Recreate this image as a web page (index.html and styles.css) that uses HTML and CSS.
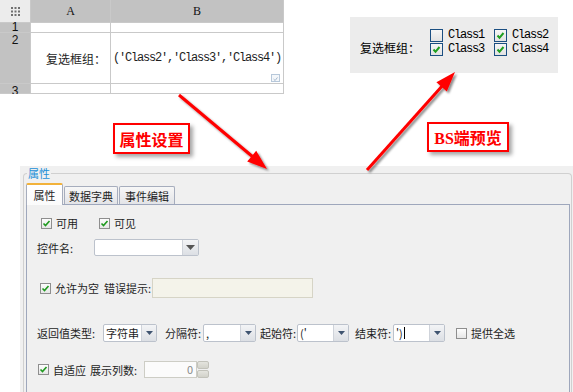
FILE: index.html
```html
<!DOCTYPE html>
<html lang="zh-CN">
<head>
    <meta charset="UTF-8">
    <title>复选框组 属性设置</title>
    <link rel="stylesheet" href="styles.css">
</head>
<body>
<div class="page">
    <div class="top">
        <!-- 报表设计器中的单元格 -->
        <div class="sheet">
            <div class="corner">
                <svg width="9" height="9" viewBox="0 0 9 9"><g fill="#707070"><rect x="0" y="0" width="2" height="2"/><rect x="3.5" y="0" width="2" height="2"/><rect x="7" y="0" width="2" height="2"/><rect x="0" y="3.5" width="2" height="2"/><rect x="3.5" y="3.5" width="2" height="2"/><rect x="7" y="3.5" width="2" height="2"/><rect x="0" y="7" width="2" height="2"/><rect x="3.5" y="7" width="2" height="2"/><rect x="7" y="7" width="2" height="2"/></g></svg>
            </div>
            <div class="colhd">A</div>
            <div class="colhd">B</div>

            <div class="rowhd">1</div>
            <div class="cell"></div>
            <div class="cell"></div>

            <div class="rowhd low">2</div>
            <div class="cell cell-label">复选框组：</div>
            <div class="cell cell-value">('Class2','Class3','Class4')
                <span class="cell-icon"><svg width="9" height="8" viewBox="0 0 9 8"><polyline points="2,4 4,6 7,2" fill="none" stroke="#9bb0c8" stroke-width="1.2"/></svg></span>
            </div>

            <div class="rowhd low">3</div>
            <div class="cell"></div>
            <div class="cell"></div>
        </div>

        <!-- BS端预览效果 -->
        <div class="preview">
            <span class="pv-label">复选框组：</span>
            <div class="pv-grid">
                <span class="pv-item"><span class="pv-box"></span>Class1</span>
                <span class="pv-item"><span class="pv-box"><svg width="11" height="11" viewBox="0 0 11 11"><polyline points="2.5,5.5 4.5,7.8 8.5,3" fill="none" stroke="#1f9e1f" stroke-width="2"/></svg></span>Class2</span>
                <span class="pv-item"><span class="pv-box"><svg width="11" height="11" viewBox="0 0 11 11"><polyline points="2.5,5.5 4.5,7.8 8.5,3" fill="none" stroke="#1f9e1f" stroke-width="2"/></svg></span>Class3</span>
                <span class="pv-item"><span class="pv-box"><svg width="11" height="11" viewBox="0 0 11 11"><polyline points="2.5,5.5 4.5,7.8 8.5,3" fill="none" stroke="#1f9e1f" stroke-width="2"/></svg></span>Class4</span>
            </div>
        </div>
    </div>

    <!-- 属性面板 -->
    <div class="window">
        <fieldset class="group">
            <legend>属性</legend>
            <div class="tabs">
                <div class="tab active">属性</div>
                <div class="tab tab-dict">数据字典</div>
                <div class="tab tab-event">事件编辑</div>
            </div>
            <div class="tab-body">
                <div class="row row-1">
                    <span class="chk on"><svg width="9" height="9" viewBox="0 0 9 9"><polyline points="1.5,4.5 3.5,6.6 7.5,2" fill="none" stroke="#1f9a1f" stroke-width="1.6"/></svg></span>
                    <span>可用</span>
                    <span class="chk on chk-visible"><svg width="9" height="9" viewBox="0 0 9 9"><polyline points="1.5,4.5 3.5,6.6 7.5,2" fill="none" stroke="#1f9a1f" stroke-width="1.6"/></svg></span>
                    <span>可见</span>
                </div>

                <div class="row row-2">
                    <span class="lbl w-name">控件名:</span>
                    <div class="combo w-105">
                        <span class="combo-text"></span>
                        <span class="combo-btn big"><svg width="9" height="5" viewBox="0 0 9 5"><polygon points="0,0 9,0 4.5,5" fill="#555"/></svg></span>
                    </div>
                </div>

                <div class="row row-3">
                    <span class="chk on"><svg width="9" height="9" viewBox="0 0 9 9"><polyline points="1.5,4.5 3.5,6.6 7.5,2" fill="none" stroke="#1f9a1f" stroke-width="1.6"/></svg></span>
                    <span class="w-44">允许为空</span>
                    <span class="lbl w-err">错误提示:</span>
                    <div class="field-disabled"></div>
                </div>

                <div class="row row-4">
                    <span class="lbl w-ret">返回值类型:</span>
                    <div class="combo w-54">
                        <span class="combo-text">字符串</span>
                        <span class="combo-btn"><svg width="7" height="4" viewBox="0 0 7 4"><polygon points="0,0 7,0 3.5,4" fill="#3f5470"/></svg></span>
                    </div>
                    <span class="lbl w-sep">分隔符:</span>
                    <div class="combo w-53">
                        <span class="combo-text">,</span>
                        <span class="combo-btn"><svg width="7" height="4" viewBox="0 0 7 4"><polygon points="0,0 7,0 3.5,4" fill="#3f5470"/></svg></span>
                    </div>
                    <span class="lbl w-start">起始符:</span>
                    <div class="combo w-52">
                        <span class="combo-text">('</span>
                        <span class="combo-btn"><svg width="7" height="4" viewBox="0 0 7 4"><polygon points="0,0 7,0 3.5,4" fill="#3f5470"/></svg></span>
                    </div>
                    <span class="lbl w-end">结束符:</span>
                    <div class="combo w-52">
                        <span class="combo-text">')<i class="caret"></i></span>
                        <span class="combo-btn"><svg width="7" height="4" viewBox="0 0 7 4"><polygon points="0,0 7,0 3.5,4" fill="#3f5470"/></svg></span>
                    </div>
                    <span class="chk chk-all"></span>
                    <span>提供全选</span>
                </div>

                <div class="row row-5">
                    <span class="chk on"><svg width="9" height="9" viewBox="0 0 9 9"><polyline points="1.5,4.5 3.5,6.6 7.5,2" fill="none" stroke="#1f9a1f" stroke-width="1.6"/></svg></span>
                    <span class="w-33">自适应</span>
                    <span class="lbl w-cols">展示列数:</span>
                    <div class="spinner">
                        <span class="spin-text">0</span>
                        <span class="spin-btns"><i></i><i></i></span>
                    </div>
                </div>
            </div>
        </fieldset>
    </div>

    <!-- 标注箭头 -->
    <svg class="arrows" width="573" height="392" viewBox="0 0 573 392">
        <defs>
            <filter id="shadow" x="-20%" y="-20%" width="140%" height="140%">
                <feDropShadow dx="2" dy="2" stdDeviation="1.2" flood-color="#000" flood-opacity="0.45"/>
            </filter>
        </defs>
        <g filter="url(#shadow)" fill="#ff0000" stroke="#ff0000">
            <line x1="179" y1="95" x2="253" y2="157" stroke-width="3"/>
            <polygon points="267,169 247.2,161.5 256.2,150.7" stroke="none"/>
            <line x1="367" y1="170" x2="443" y2="85" stroke-width="3"/>
            <polygon points="455,72 446.8,91.6 436.4,82.2" stroke="none"/>
        </g>
    </svg>
    <div class="note note-set">属性设置</div>
    <div class="note note-bs">BS端预览</div>
</div>
</body>
</html>
```

FILE: styles.css
```css
* { box-sizing: border-box; }
body {
    margin: 0;
    background: #fff;
    font-family: "Noto Sans CJK SC", "Liberation Sans", sans-serif;
    color: #1e1e1e;
}
.page {
    position: relative;
    width: 573px;
    height: 392px;
    overflow: hidden;
}
.top {
    display: flex;
    align-items: flex-start;
    height: 166px;
}

/* spreadsheet */
.sheet {
    display: grid;
    grid-template-columns: 30px 79px 172px;
    grid-template-rows: 22px 9px 50px 9px;
    gap: 1px;
    padding: 0 1px 1px 0;
    background: #c9c9c9;
    font-size: 12px;
    overflow: hidden;
}
.corner {
    background: #ececec;
    display: flex;
    align-items: center;
    justify-content: center;
}
.colhd {
    background: #c2c2c2;
    display: flex;
    align-items: center;
    justify-content: center;
    font-family: "Liberation Serif", serif;
    color: #111;
}
.rowhd {
    background: #c2c2c2;
    text-align: center;
    line-height: 9px;
    font-family: "Liberation Sans", sans-serif;
    color: #111;
}
.rowhd.low { padding-top: 3px; }
.cell { background: #fff; position: relative; }
.cell-label {
    display: flex;
    align-items: center;
    justify-content: flex-end;
    padding-right: 4px;
}
.cell-value {
    display: flex;
    align-items: center;
    padding-left: 2px;
    font-family: "Liberation Mono", monospace;
    letter-spacing: -1.2px;
    white-space: nowrap;
}
.cell-icon {
    position: absolute;
    right: 3px;
    bottom: 1px;
    width: 9px;
    height: 8px;
    border: 1px solid #b7c8da;
    background: #f4f7fa;
    display: flex;
}

/* preview */
.preview {
    margin: 17px 0 0 66px;
    width: 208px;
    height: 56px;
    background: #ececec;
    display: flex;
    align-items: flex-start;
    padding: 11px 0 0 10px;
    font-size: 12px;
    color: #000;
}
.pv-label { width: 70px; margin-top: 11px; line-height: 17px; }
.pv-grid {
    display: grid;
    grid-template-columns: 64px 60px;
    grid-auto-rows: 14px;
}
.pv-item {
    display: flex;
    align-items: center;
    font-family: "Liberation Mono", monospace;
    letter-spacing: -1.2px;
}
.pv-box {
    width: 13px;
    height: 13px;
    margin-right: 5px;
    border: 1px solid #1b4f82;
    background: linear-gradient(#f6f6f6, #e2e2e2);
    display: flex;
    align-items: center;
    justify-content: center;
}

/* property window */
.window {
    margin-left: 20px;
    height: 226px;
    background: #f0f0f0;
    padding: 0 1px 0 3px;
    overflow: hidden;
    font-size: 11px;
}
.group {
    margin: 0;
    height: 240px;
    padding: 0 1px 0 2px;
    border: 1px solid #d0d0d0;
    border-bottom: none;
    border-radius: 4px 4px 0 0;
}
.group legend {
    color: #1b8fd8;
    font-size: 11px;
    line-height: 14px;
    padding: 0 1px;
    margin-left: 1px;
}
.tabs {
    display: flex;
    align-items: flex-end;
    height: 21px;
    margin-top: 3px;
}
.tab {
    height: 18px;
    border: 1px solid #a6adbd;
    border-bottom: none;
    border-radius: 2px 2px 0 0;
    background: linear-gradient(#f7f7f7, #e3e4e7);
    display: flex;
    align-items: center;
    justify-content: center;
}
.tab.active {
    width: 37px;
    height: 22px;
    margin-bottom: -1px;
    position: relative;
    z-index: 1;
    border-top: 2px solid #f2b23a;
    border-color: #f2b23a #a6adbd #a6adbd;
    background: linear-gradient(#fff, #fbfbfb);
}
.tab-dict { width: 54px; margin-left: 1px; }
.tab-event { width: 56px; margin-left: 1px; }
.tab-body {
    height: 200px;
    border: 1px solid #9ea7bc;
    background: #f0f0f0;
}

.row { display: flex; align-items: center; white-space: nowrap; }
.row-1 { margin-top: 11px; height: 14px; padding-left: 14px; }
.row-2 { margin-top: 9px; height: 17px; padding-left: 10px; }
.row-3 { margin-top: 22px; height: 20px; padding-left: 13px; }
.row-4 { margin-top: 26px; height: 18px; padding-left: 10px; }
.row-5 { margin-top: 19px; height: 17px; padding-left: 11px; }

.chk {
    width: 11px;
    height: 11px;
    margin-right: 4px;
    border: 1px solid #8e8e8e;
    background: linear-gradient(#fdfdfd, #e6e6e6);
    display: flex;
    align-items: center;
    justify-content: center;
}
.chk-visible { margin-left: 21px; }
.chk-all { margin-left: 11px; }

.lbl { display: inline-block; }
.w-name { width: 57px; }
.w-44 { width: 44px; }
.w-33 { width: 33px; }
.w-err { width: 48px; margin-left: 5px; }
.w-ret { width: 66px; }
.w-sep { width: 38px; margin-left: 8px; }
.w-start { width: 37px; margin-left: 4px; }
.w-end { width: 38px; margin-left: 6px; }
.w-cols { width: 54px; margin-left: 4px; }

.combo {
    display: flex;
    height: 100%;
    border: 1px solid #bcc2cc;
    border-radius: 2px;
    background: #fff;
}
.w-105 { width: 105px; }
.w-54 { width: 54px; }
.w-53 { width: 53px; }
.w-52 { width: 52px; }
.combo-text {
    flex: 1;
    display: flex;
    align-items: center;
    padding-left: 2px;
    overflow: hidden;
}
.combo-btn {
    width: 15px;
    border-left: 1px solid #cfd3da;
    background: linear-gradient(#f3f4f6, #dcdfe4);
    display: flex;
    align-items: center;
    justify-content: center;
}
.combo-btn.big { width: 16px; }
.caret {
    display: inline-block;
    width: 1px;
    height: 12px;
    margin-left: 1px;
    background: #000;
}
.field-disabled {
    width: 161px;
    height: 100%;
    border: 1px solid #d6d4c6;
    background: #f4f3ea;
}
.spinner {
    display: flex;
    width: 65px;
    height: 100%;
}
.spin-text {
    flex: 1;
    border: 1px solid #cdcdc5;
    background: #fbfbfb;
    color: #8a8a8a;
    text-align: right;
    padding-right: 3px;
    line-height: 15px;
}
.spin-btns {
    width: 12px;
    display: flex;
    flex-direction: column;
    gap: 1px;
}
.spin-btns i {
    flex: 1;
    border: 1px solid #c2c2ba;
    border-radius: 2px;
    background: linear-gradient(#e4e4de, #d2d2ca);
}

/* annotations */
.arrows {
    position: absolute;
    left: 0;
    top: 0;
    pointer-events: none;
}
.note {
    position: absolute;
    border: 2px solid #ff0000;
    background: #fff;
    color: #ff0000;
    font-weight: bold;
    font-size: 16px;
    display: flex;
    align-items: center;
    justify-content: center;
    box-shadow: 3px 3px 4px rgba(0, 0, 0, 0.35);
}
.note-set { left: 113px; top: 123px; width: 77px; height: 31px; }
.note-bs {
    left: 427px;
    top: 122px;
    width: 82px;
    height: 30px;
    font-family: "Liberation Serif", "Noto Sans CJK SC", serif;
}
```
